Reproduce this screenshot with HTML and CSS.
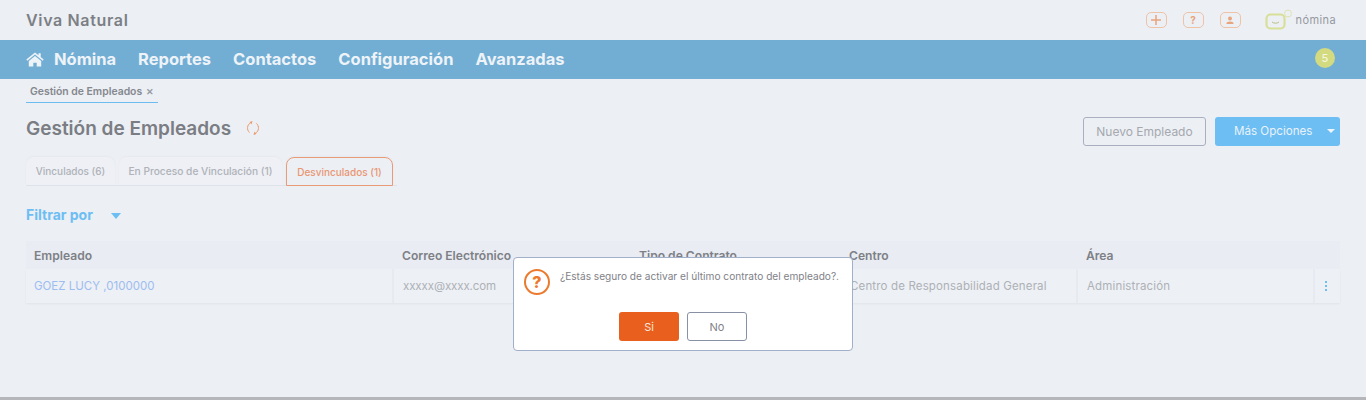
FILE: index.html
```html
<!DOCTYPE html>
<html lang="es">
<head>
    <meta charset="UTF-8">
    <title>Gestión de Empleados</title>
    <link rel="stylesheet" href="styles.css">
</head>
<body>
<div class="page">
    <header class="topbar">
        <div class="company">Viva Natural</div>
        <div class="top-actions">
            <span class="top-btn">
                <svg width="12" height="12" viewBox="0 0 12 12"><path d="M6 1v10M1 6h10" stroke="#e8a47c" stroke-width="1.5" fill="none"/></svg>
            </span>
            <span class="top-btn top-btn-text">?</span>
            <span class="top-btn">
                <svg width="8" height="8" viewBox="0 0 10 10"><circle cx="5" cy="3" r="2.500" fill="#e8a47c"/><path d="M0.500 10c0-4 9-4 9 0z" fill="#e8a47c"/></svg>
            </span>
            <div class="product">
                <svg width="28" height="22" viewBox="0 0 28 22">
                    <rect x="1.5" y="5.500" width="18" height="14" rx="4" fill="none" stroke="#d8df98" stroke-width="2.200"/>
                    <path d="M7 13c2 1.600 5 1.600 7 0" fill="none" stroke="#b9bf84" stroke-width="1"/>
                    <circle cx="23" cy="4.500" r="3.500" fill="none" stroke="#dfe3b0" stroke-width="1"/>
                </svg>
                <span class="product-name">nómina</span>
            </div>
        </div>
    </header>

    <nav class="mainnav">
        <svg class="home" width="18" height="15" viewBox="0 0 18 15">
            <path d="M9 0.500L0.300 7.600l1 1.200L9 2.600l7.700 6.200 1-1.200-3-2.500V1.200h-2.200v2.100z" fill="#eef3f8"/>
            <path d="M9 4L2.800 9v5.600h4.500v-3.800h3.400v3.800h4.500V9z" fill="#eef3f8"/>
        </svg>
        <a class="nav-link nav-first">Nómina</a>
        <a class="nav-link">Reportes</a>
        <a class="nav-link">Contactos</a>
        <a class="nav-link">Configuración</a>
        <a class="nav-link">Avanzadas</a>
        <span class="nav-badge">5</span>
    </nav>

    <main class="content">
        <div class="crumb-row">
            <div class="crumb">Gestión de Empleados <span class="crumb-x">✕</span></div>
        </div>

        <div class="title-row">
            <h1>Gestión de Empleados</h1>
            <svg class="refresh" width="14" height="16" viewBox="0 0 14 16">
                <path d="M4.500 2.800C1 4.800 0.500 9.800 3.500 12.600M9.500 13.200C13 11.200 13.500 6.200 10.500 3.400" fill="none" stroke="#ec9a6f" stroke-width="1"/>
                <path d="M6.500 1L3.500 2l2 2.500zM7.500 15l3-1-2-2.500z" fill="#ec9a6f"/>
            </svg>
            <div class="title-actions">
                <button class="btn-outline">Nuevo Empleado</button>
                <button class="btn-more">Más Opciones <span class="caret caret-white"></span></button>
            </div>
        </div>

        <div class="tabs">
            <div class="tab tab-first">Vinculados (6)</div>
            <div class="tab tab-second">En Proceso de Vinculación (1)</div>
            <div class="tab tab-active">Desvinculados (1)</div>
        </div>

        <div class="filter">Filtrar por <span class="caret caret-blue"></span></div>

        <div class="grid">
            <div class="grid-head">
                <div class="col-emp">Empleado</div>
                <div class="col-mail">Correo Electrónico</div>
                <div class="col-type">Tipo de Contrato</div>
                <div class="col-center">Centro</div>
                <div class="col-area">Área</div>
                <div class="col-menu"></div>
            </div>
            <div class="grid-row">
                <div class="col-emp emp-link">GOEZ LUCY ,0100000</div>
                <div class="col-mail">xxxxx@xxxx.com</div>
                <div class="col-type"></div>
                <div class="col-center">Centro de Responsabilidad General</div>
                <div class="col-area">Administración</div>
                <div class="col-menu"><span class="dots"><i></i><i></i><i></i></span></div>
            </div>
        </div>
    </main>

    <div class="dialog">
        <div class="dialog-body">
            <span class="dialog-icon">?</span>
            <p>¿Estás seguro de activar el último contrato del empleado?.</p>
        </div>
        <div class="dialog-btns">
            <button class="btn-yes">Si</button>
            <button class="btn-no">No</button>
        </div>
    </div>
</div>
</body>
</html>
```

FILE: styles.css
```css
/* Global */
* {
    margin: 0;
    padding: 0;
    box-sizing: border-box;
    font-family: "Inter", "Open Sans", sans-serif;
}

html, body {
    height: 100%;
    overflow: hidden;
}

body {
    background-color: #eceff4;
}

.page {
    position: relative;
    height: 400px;
    border-bottom: 3px solid #b4b6ba;
}

/* Top bar */
.topbar {
    height: 40px;
    display: flex;
    align-items: center;
    justify-content: space-between;
    padding: 0 30px 0 26px;
}

.company {
    font-size: 16px;
    font-weight: 600;
    letter-spacing: 0.65px;
    color: #7c7f85;
}

.top-actions {
    display: flex;
    align-items: center;
}

.top-btn {
    width: 21px;
    height: 16px;
    margin-right: 16px;
    border: 1px solid #efc3a6;
    border-radius: 5px;
    display: flex;
    align-items: center;
    justify-content: center;
}

.top-btn-text {
    font-size: 10px;
    font-weight: 700;
    color: #e8a47c;
}

.product {
    display: flex;
    align-items: center;
    margin-left: 8px;
}

.product-name {
    font-size: 11px;
    letter-spacing: 0.4px;
    color: #96999f;
    margin-left: 3px;
}

/* Main nav */
.mainnav {
    height: 39px;
    background-color: #72aed4;
    display: flex;
    align-items: center;
    padding-left: 26px;
    position: relative;
}

.nav-link {
    font-size: 16.500px;
    font-weight: 700;
    line-height: 20px;
    margin-top: -1px;
    color: #eef3f8;
    margin-right: 22px;
}

.nav-first {
    margin-left: 10px;
}

.nav-badge {
    position: absolute;
    left: 1315px;
    top: 8px;
    width: 20px;
    height: 20px;
    border-radius: 50%;
    background-color: #d3da80;
    color: #f3f5dc;
    font-size: 11px;
    font-weight: 500;
    display: flex;
    align-items: center;
    justify-content: center;
}

/* Content */
.content {
    padding: 0 26px;
}

.crumb-row {
    height: 24px;
}

.crumb {
    display: inline-block;
    height: 24px;
    padding: 6px 4px 0;
    font-size: 10.400px;
    font-weight: 600;
    color: #85888e;
    border-bottom: 1px solid #6cbcf0;
}

.crumb-x {
    font-size: 9px;
    color: #989ba5;
    margin-left: 1px;
}

.title-row {
    height: 54px;
    display: flex;
    align-items: center;
    padding-top: 2px;
}

h1 {
    font-size: 19px;
    font-weight: 600;
    color: #7a7d83;
    padding-bottom: 6px;
}

.refresh {
    margin: 0 0 6px 15px;
}

.title-actions {
    margin-left: auto;
    display: flex;
    gap: 9px;
}

button {
    cursor: pointer;
}

.btn-outline {
    width: 123px;
    height: 29px;
    background: transparent;
    border: 1px solid #a9afbf;
    border-radius: 3px;
    font-size: 12px;
    color: #a5a8ae;
}

.btn-more {
    width: 125px;
    height: 29px;
    background-color: #6cbef3;
    border: none;
    border-radius: 3px;
    font-size: 11.600px;
    color: #e9f2fa;
    position: relative;
    text-align: left;
    padding-left: 19px;
}

.caret {
    display: inline-block;
    width: 0;
    height: 0;
    border-left: 5px solid transparent;
    border-right: 5px solid transparent;
}

.caret-white {
    position: absolute;
    right: 5px;
    top: 12px;
    border-left-width: 4px;
    border-right-width: 4px;
    border-top: 4px solid #eef5fb;
}

.caret-blue {
    border-top: 6px solid #6cbef3;
    margin-left: 15px;
    vertical-align: middle;
}

/* Tabs */
.tabs {
    display: flex;
    gap: 4px;
    width: 371px;
    height: 29px;
    border-bottom: 1px solid #dfe2e8;
    white-space: nowrap;
}

.tab {
    height: 28px;
    background-color: #eef0f5;
    border-radius: 8px 8px 0 0;
    box-shadow: 0 -1px 2px rgba(0, 0, 0, 0.03);
    font-size: 10px;
    font-weight: 500;
    line-height: 28px;
    text-align: center;
    color: #afb2b8;
}

.tab-first {
    width: 89px;
}

.tab-second {
    width: 163px;
    font-size: 10.200px;
}

.tab-active {
    width: 107px;
    height: 29px;
    background: transparent;
    border: 1px solid #e99b77;
    color: #e99672;
}

.filter {
    margin-top: 20px;
    height: 20px;
    font-size: 14px;
    font-weight: 700;
    color: #6cbef3;
}

/* Table */
.grid {
    margin-top: 15px;
}

.grid-head, .grid-row {
    display: grid;
    grid-template-columns: 368px 237px 210px 237px 237px 25px;
}

.grid-head {
    height: 28px;
    align-items: center;
    background-color: #e9ecf2;
    font-size: 12.100px;
    font-weight: 600;
    color: #7d8086;
}

.grid-head > div {
    padding-left: 8px;
}

.grid-row {
    height: 34px;
    background-color: #edf0f5;
    box-shadow: 0 1px 2px rgba(0, 0, 0, 0.05);
    color: #adb0b6;
    font-size: 11.500px;
    letter-spacing: 0.15px;
}

.grid-row > div {
    display: flex;
    align-items: center;
    padding-left: 9px;
    border-right: 2px solid #e7eaf0;
}

.grid-row > div.col-menu {
    border-right: none;
}

.grid-row > div.col-emp {
    padding-left: 8px;
    letter-spacing: 0;
}

.grid-row > div.col-mail {
    letter-spacing: -0.1px;
}

.emp-link {
    color: #9dbdf0;
}

.dots {
    display: flex;
    flex-direction: column;
    gap: 2px;
    margin-left: 1px;
}

.dots i {
    width: 2px;
    height: 2px;
    background-color: #6cbef3;
}

/* Dialog */
.dialog {
    position: absolute;
    left: 513px;
    top: 257px;
    width: 340px;
    height: 94px;
    background-color: #fff;
    border: 1px solid #a2afc9;
    border-radius: 4px;
}

.dialog-body {
    display: flex;
    align-items: flex-start;
    padding: 11px 10px 0;
}

.dialog-icon {
    width: 26px;
    height: 26px;
    flex-shrink: 0;
    border: 2px solid #ec7a2e;
    border-radius: 50%;
    color: #ec7a2e;
    font-size: 16px;
    font-weight: 800;
    display: flex;
    align-items: center;
    justify-content: center;
}

.dialog-body p {
    margin: 1px 0 0 10px;
    font-size: 10.150px;
    color: #7f8288;
    white-space: nowrap;
}

.dialog-btns {
    display: flex;
    justify-content: center;
    gap: 8px;
    margin-top: 17px;
}

.btn-yes, .btn-no {
    width: 60px;
    height: 29px;
    border-radius: 3px;
    font-size: 11px;
}

.btn-yes {
    background-color: #e95f1d;
    border: none;
    color: #f7e8dd;
}

.btn-no {
    background-color: #fff;
    border: 1px solid #8890a6;
    color: #7f8288;
}
```
